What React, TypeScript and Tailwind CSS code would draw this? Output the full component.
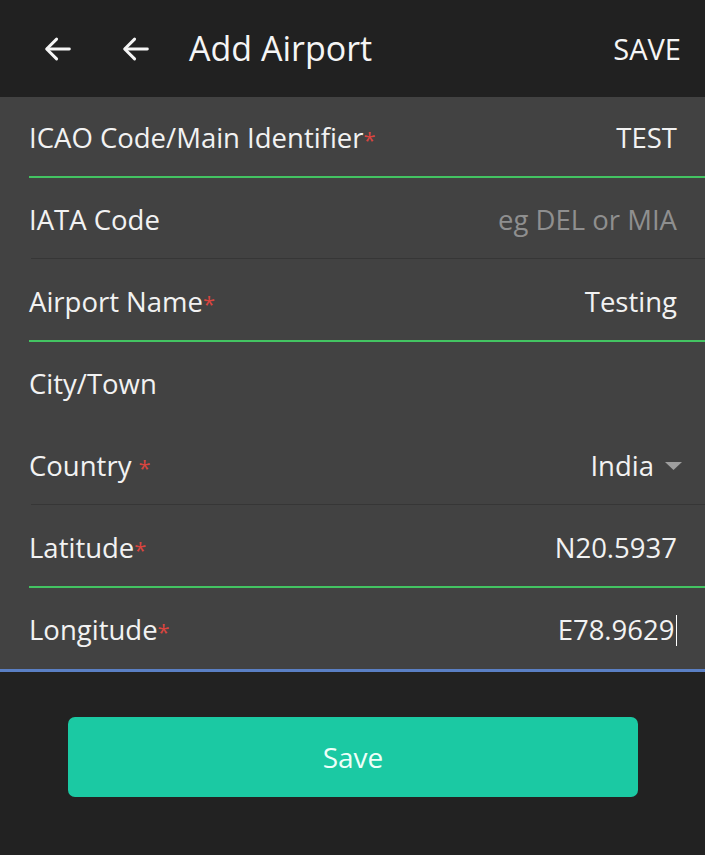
import React from "react";

type Field = {
  label: string;
  required?: boolean;
  value?: string;
  placeholder?: string;
  line: "green" | "gray" | "none";
  select?: boolean;
  cursor?: boolean;
};

const fields: Field[] = [
  { label: "ICAO Code/Main Identifier", required: true, value: "TEST", line: "green" },
  { label: "IATA Code", placeholder: "eg DEL or MIA", line: "gray" },
  { label: "Airport Name", required: true, value: "Testing", line: "green" },
  { label: "City/Town", line: "none" },
  { label: "Country ", required: true, value: "India", line: "gray", select: true },
  { label: "Latitude", required: true, value: "N20.5937", line: "green" },
  { label: "Longitude", required: true, value: "E78.9629", line: "none", cursor: true },
];

function Arrow() {
  return (
    <svg width="34" height="34" viewBox="0 0 24 24" fill="none" stroke="#f5f5f5" strokeWidth="2.1" strokeLinecap="round" strokeLinejoin="round">
      <path d="M20 12H4.5" />
      <path d="M11 5l-7 7 7 7" />
    </svg>
  );
}

function Row({ f, last }: { f: Field; last: boolean }) {
  return (
    <div className={`${last ? "h-[80px]" : "h-[82px]"} flex flex-col`}>
      <div className="h-[79px] pt-[3px] flex items-center justify-between pl-[29px] pr-[28px]">
        <span className="text-[27.5px] text-[#f2f2f2]">
          {f.label}
          {f.required && <span className="text-[#d9453f] text-[22px]">*</span>}
        </span>
        {f.value && (
          <span className="flex items-center text-[27.5px] text-[#f2f2f2]">
            {f.value}
            {f.cursor && <span className="inline-block w-[1.5px] h-[31px] bg-white ml-[1px]" />}
            {f.select && (
              <svg width="18" height="10" viewBox="0 0 18 10" className="ml-[11px] mr-[-6px]">
                <path d="M0 1h17l-8.5 8z" fill="#9e9e9e" />
              </svg>
            )}
          </span>
        )}
        {f.placeholder && <span className="text-[27.5px] text-[#8f8f8f]">{f.placeholder}</span>}
      </div>
      {f.line === "green" && <div className="h-[2px] ml-[29px] bg-[#43c462]" />}
      {f.line === "gray" && <div className="h-[1px] ml-[31px] bg-[#363636]" />}
    </div>
  );
}

export default function App() {
  return (
    <div className="w-[705px] h-[855px] bg-[#212121] flex flex-col" style={{ fontFamily: '"Open Sans", "Noto Sans", sans-serif' }}>
      <header className="h-[97px] bg-[#212121] flex items-center pl-[41px] pr-[24px] text-[#f5f5f5]">
        <Arrow />
        <div className="ml-[44px]">
          <Arrow />
        </div>
        <h1 className="ml-[36px] text-[34px]">Add Airport</h1>
        <span className="ml-auto text-[29px]">SAVE</span>
      </header>
      <div className="bg-[#424242]">
        {fields.map((f, i) => (
          <Row key={f.label} f={f} last={i === fields.length - 1} />
        ))}
      </div>
      <div className="h-[3px] bg-[#5a7fc4]" />
      <div className="flex-1 bg-[#222222] pt-[45px] px-[68px]">
        <button className="w-[570px] h-[80px] rounded-[7px] bg-[#1bc9a3] text-[28px] text-[#eefff9]">Save</button>
      </div>
    </div>
  );
}
